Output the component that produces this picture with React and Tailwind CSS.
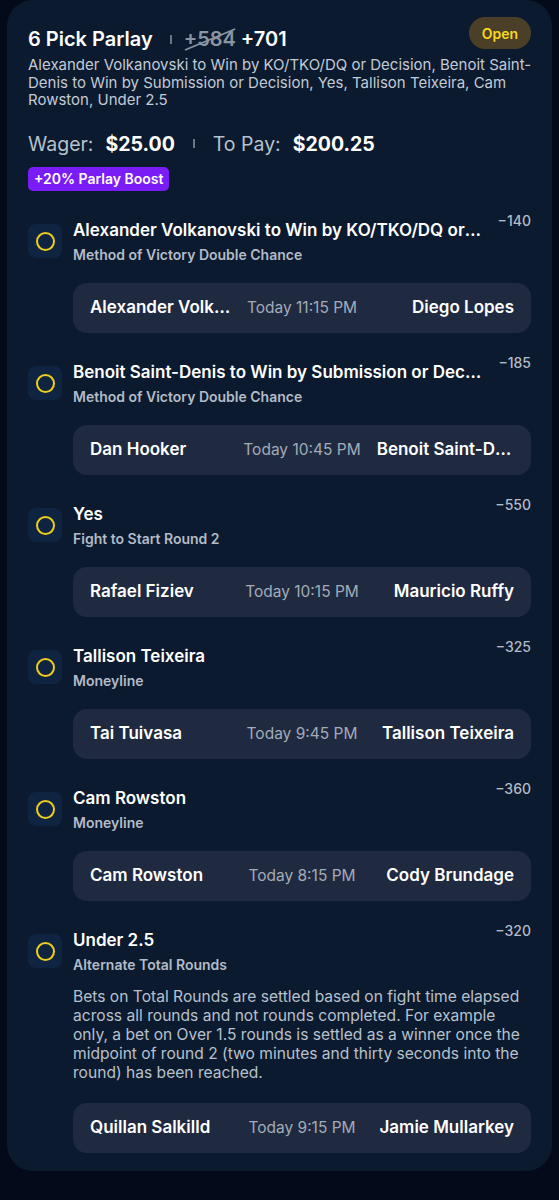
import React from 'react';

const legs = [
	{
		title: 'Alexander Volkanovski to Win by KO/TKO/DQ or Decision',
		market: 'Method of Victory Double Chance',
		odds: '−140',
		home: 'Alexander Volkanovski',
		time: 'Today 11:15 PM',
		away: 'Diego Lopes',
	},
	{
		title: 'Benoit Saint-Denis to Win by Submission or Decision',
		market: 'Method of Victory Double Chance',
		odds: '−185',
		home: 'Dan Hooker',
		time: 'Today 10:45 PM',
		away: 'Benoit Saint-Denis',
	},
	{
		title: 'Yes',
		market: 'Fight to Start Round 2',
		odds: '−550',
		home: 'Rafael Fiziev',
		time: 'Today 10:15 PM',
		away: 'Mauricio Ruffy',
	},
	{
		title: 'Tallison Teixeira',
		market: 'Moneyline',
		odds: '−325',
		home: 'Tai Tuivasa',
		time: 'Today 9:45 PM',
		away: 'Tallison Teixeira',
	},
	{
		title: 'Cam Rowston',
		market: 'Moneyline',
		odds: '−360',
		home: 'Cam Rowston',
		time: 'Today 8:15 PM',
		away: 'Cody Brundage',
	},
	{
		title: 'Under 2.5',
		market: 'Alternate Total Rounds',
		odds: '−320',
		note: [
			'Bets on Total Rounds are settled based on fight time elapsed',
			'across all rounds and not rounds completed. For example',
			'only, a bet on Over 1.5 rounds is settled as a winner once the',
			'midpoint of round 2 (two minutes and thirty seconds into the',
			'round) has been reached.',
		],
		home: 'Quillan Salkilld',
		time: 'Today 9:15 PM',
		away: 'Jamie Mullarkey',
	},
];

function Leg({ leg }) {
	return (
		<div className="flex flex-col">
			<div className="flex items-center">
				<div className="w-[34px] h-[34px] shrink-0 rounded-lg bg-[#0f2440] flex items-center justify-center">
					<div className="w-[19px] h-[19px] rounded-full border-2 border-[#f0cc1c]" />
				</div>
				<div className="flex-1 min-w-0 ml-[11px]">
					<div className="text-[17px] leading-[24px] font-semibold text-white truncate">{leg.title}</div>
					<div className="mt-[3px] text-[14px] leading-[20px] font-semibold text-[#b3bbc7]">{leg.market}</div>
				</div>
				<div className="self-start -mt-[7px] ml-[16px] text-[14px] leading-[20px] font-medium text-[#b3bbc7]">{leg.odds}</div>
			</div>
			{leg.note && (
				<p className="ml-[45px] mt-[12px] whitespace-nowrap text-[15.6px] leading-[19px] text-[#b8c0cc]">
					{leg.note.map((line, i) => (
						<React.Fragment key={i}>
							{line}
							{i < leg.note.length - 1 && <br />}
						</React.Fragment>
					))}
				</p>
			)}
			{/* matchup pill */}
			<div className={`ml-[45px] ${leg.note ? 'mt-[21px]' : 'mt-[18px]'} h-[50px] rounded-[14px] bg-[#1f2a40] px-[17px] grid grid-cols-[1fr_auto_1fr] items-center gap-[16px]`}>
				<span className="text-[17px] font-semibold text-white truncate">{leg.home}</span>
				<span className="text-[15.5px] text-[#a3abb8]">{leg.time}</span>
				<span className="text-[17px] font-semibold text-white truncate text-right">{leg.away}</span>
			</div>
		</div>
	);
}

export default function App() {
	return (
		<div className="min-h-[1200px] bg-[#050a1b] px-[7px] font-['Inter',sans-serif]">
			<div className="rounded-[26px] bg-[#0b1a2e] pl-[21px] pr-[19px] pt-[17px] pb-[18px]">
				{/* header */}
				<div className="flex items-start justify-between pr-[2px]">
					<div className="mt-[8px] flex items-center text-[20px] leading-[28px] font-semibold text-white">
						<span>6 Pick Parlay</span>
						<span className="ml-[17px] mr-[12px] w-[2px] h-[9px] bg-[#6b7585]" />
						<span className="relative text-[#8a94a3]">
							+584
							<svg className="absolute left-0 top-0 w-full h-full" viewBox="0 0 50 28" preserveAspectRatio="none">
								<line x1="1" y1="25" x2="49" y2="4" stroke="#8a94a3" strokeWidth="1.6" />
							</svg>
						</span>
						<span className="ml-[5px]">+701</span>
					</div>
					<div className="h-[32px] px-[13px] rounded-full bg-[#4b4027] flex items-center text-[14px] font-semibold text-[#f5d81e]">
						Open
					</div>
				</div>
				<p className="mt-[3px] text-[15px] leading-[17.5px] text-[#c3cad5]">
					Alexander Volkanovski to Win by KO/TKO/DQ or Decision, Benoit Saint-Denis to Win by Submission or Decision, Yes, Tallison Teixeira, Cam Rowston, Under 2.5
				</p>

				{/* wager */}
				<div className="mt-[22px] flex items-center text-[19.5px] leading-[26px]">
					<span className="text-[#b8c0cc]">Wager:</span>
					<span className="ml-[12px] font-bold text-white">$25.00</span>
					<span className="mx-[18px] w-[2px] h-[9px] bg-[#6b7585]" />
					<span className="text-[#b8c0cc]">To Pay:</span>
					<span className="ml-[12px] font-bold text-white">$200.25</span>
				</div>
				<div className="mt-[10px] inline-flex h-[24px] items-center rounded-[5px] bg-[#7a1cf6] px-[6px] text-[14px] font-semibold text-white">
					+20% Parlay Boost
				</div>

				{/* legs */}
				<div className="mt-[27px] mr-[2px] flex flex-col gap-[27px]">
					{legs.map((leg) => (
						<Leg key={leg.title} leg={leg} />
					))}
				</div>
			</div>
		</div>
	);
}
